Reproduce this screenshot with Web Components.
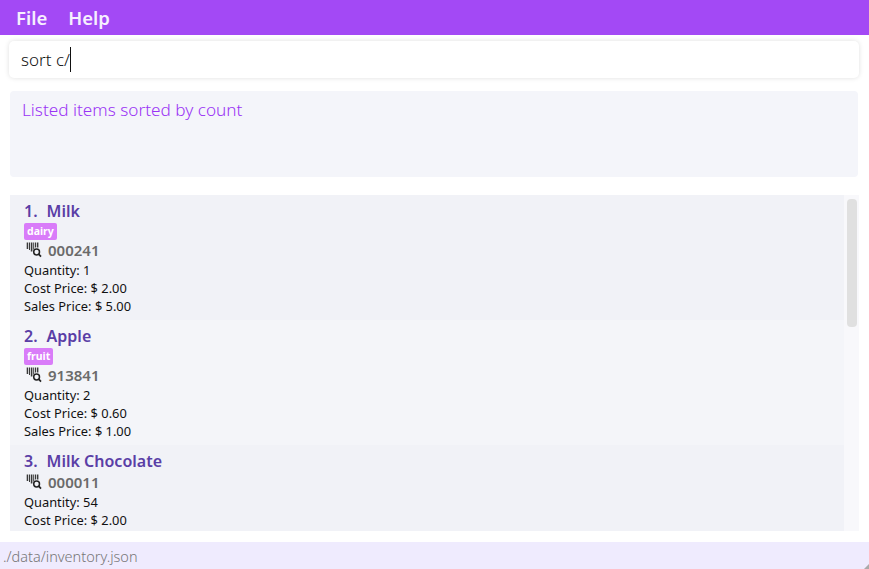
<!DOCTYPE html>
<html><head><meta charset="utf-8"><style>
html,body{margin:0;padding:0;height:100%;background:#fff;overflow:hidden}
body{font-family:"Noto Sans","Open Sans",sans-serif}
</style></head><body>
<inv-app></inv-app>
<template id="barcode"><svg width="18" height="16" viewBox="0 0 18 16" style="display:block" fill="none"><g fill="#3a3a3a"><rect x="2.7" y="0.5" width="1.5" height="6.5"/><rect x="5" y="0.5" width="1" height="7.5"/><rect x="6.8" y="0.5" width="1.6" height="9"/><rect x="9.2" y="0.5" width="1" height="7"/><rect x="11" y="0.5" width="1" height="5"/><rect x="12.8" y="0.5" width="1.6" height="5"/></g><circle cx="12.6" cy="10" r="2.9" stroke="#222" stroke-width="1.5"/><path d="M14.7 12.1L17 14.6" stroke="#222" stroke-width="1.7"/></svg></template>
<script>
const barcode=document.getElementById('barcode').innerHTML;
customElements.define('inv-menu',class extends HTMLElement{constructor(){super();this.attachShadow({mode:'open'}).innerHTML=`<style>
:host{display:flex;height:35px;background:#a349f5;color:#f6effe;font-size:18.5px;font-weight:600;align-items:center;padding-left:16px;gap:21px;box-sizing:border-box;padding-bottom:1px}
</style><span>File</span><span>Help</span>`}});
customElements.define('inv-command',class extends HTMLElement{constructor(){super();this.attachShadow({mode:'open'}).innerHTML=`<style>
:host{display:flex;align-items:center;height:37px;margin:6px 10px 0 9px;background:#fff;border-radius:5px;box-shadow:0 0 5px rgba(0,0,0,.13);padding-left:12px;font-size:17px;font-weight:300;color:#111;box-sizing:border-box}
i{display:inline-block;width:1px;height:25px;background:#111;margin-left:0}
</style><span>sort c/</span><i></i>`}});
customElements.define('inv-result',class extends HTMLElement{constructor(){super();this.attachShadow({mode:'open'}).innerHTML=`<style>
:host{display:block;height:86px;margin:13px 11px 0 10px;background:#f4f5fa;border-radius:4px;padding:7px 12px;font-size:17.2px;font-weight:300;color:#9a33f5;box-sizing:border-box;line-height:23px}
</style><slot></slot>`}});
customElements.define('inv-card',class extends HTMLElement{connectedCallback(){if(this.shadowRoot)return;const a=n=>this.getAttribute(n);const r=this.attachShadow({mode:'open'});
const tag=a('tag'),sale=a('sale');
r.innerHTML=`<style>
:host{display:block;height:125px;box-sizing:border-box;padding:6px 14px 0;background:var(--bg,#f1f2f7);color:#111;font-size:12.85px;line-height:18px;flex:none}
.n{font-size:16px;font-weight:600;color:#5a3ea6;line-height:21px;display:flex;gap:9px}
.t{display:inline-block;background:#d97cf9;color:#fff;font-size:10.5px;font-weight:700;line-height:17px;height:17px;border-radius:2px;padding:0 3px;vertical-align:top;margin-top:1px}
.tw{height:18px}
.c{display:flex;align-items:center;height:20px;font-size:15px;font-weight:600;color:#6a6a6a;gap:6px;margin-bottom:1px}
.c span{display:flex}
.q{margin-top:1px}
</style><div class="n"><span>${a('i')}.</span><span>${a('name')}</span></div>${tag?`<div class="tw"><span class="t">${tag}</span></div>`:''}<div class="c"><span>${barcode}</span>${a('code')}</div><div class="q">Quantity: ${a('q')}</div><div>Cost Price: $ ${a('cost')}</div>${sale?`<div>Sales Price: $ ${sale}</div>`:''}`}});
customElements.define('inv-list',class extends HTMLElement{constructor(){super();this.attachShadow({mode:'open'}).innerHTML=`<style>
:host{display:flex;height:336px;margin:18px 10px 0 10px;overflow:hidden;background:#f8f8fb}
.l{width:834px;display:flex;flex-direction:column;overflow:hidden}
.b{flex:1;position:relative}
.th{position:absolute;left:3px;top:4px;width:10px;height:128px;background:#e0e0e0;border-radius:4px}
</style><div class="l"><slot></slot></div><div class="b"><div class="th"></div></div>`}});
customElements.define('inv-status',class extends HTMLElement{constructor(){super();this.attachShadow({mode:'open'}).innerHTML=`<style>
:host{display:flex;align-items:center;height:27px;margin-top:11px;background:#efebfe;color:#777;font-size:14.5px;font-weight:300;padding-left:3px;box-sizing:border-box;position:relative}
svg{position:absolute;right:0;bottom:0}
</style><slot></slot><svg width="5" height="5" viewBox="0 0 5 5"><path d="M5 0V5H0Z" fill="#aaa"/></svg>`}});
customElements.define('inv-app',class extends HTMLElement{constructor(){super();this.attachShadow({mode:'open'}).innerHTML=`<style>
:host{display:block;width:869px;height:569px;overflow:hidden}
</style><inv-menu></inv-menu><inv-command></inv-command><inv-result>Listed items sorted by count</inv-result>
<inv-list>
<inv-card i="1" name="Milk" tag="dairy" code="000241" q="1" cost="2.00" sale="5.00"></inv-card>
<inv-card style="--bg:#f4f5f9" i="2" name="Apple" tag="fruit" code="913841" q="2" cost="0.60" sale="1.00"></inv-card>
<inv-card i="3" name="Milk Chocolate" code="000011" q="54" cost="2.00"></inv-card>
</inv-list><inv-status>./data/inventory.json</inv-status>`}});
</script></body></html>
